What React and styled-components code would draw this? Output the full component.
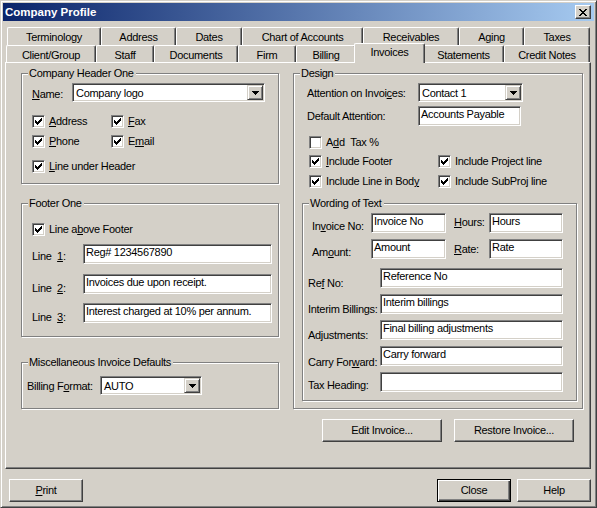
import React from 'react';
import styled, { createGlobalStyle, css } from 'styled-components';

const FACE = '#d4d0c8';
const LIGHT = '#ffffff';
const SHADOW = '#808080';
const DARK = '#404040';

const GlobalStyle = createGlobalStyle`
  html, body { margin: 0; padding: 0; background: ${FACE}; }
  *, *::before, *::after { box-sizing: border-box; }
`;

const raised = css`
  border: 1px solid;
  border-color: ${LIGHT} ${DARK} ${DARK} ${LIGHT};
  box-shadow: inset -1px -1px 0 ${SHADOW};
`;

const sunken = css`
  border: 1px solid;
  border-color: ${SHADOW} ${LIGHT} ${LIGHT} ${SHADOW};
  box-shadow: inset 1px 1px 0 ${DARK}, inset -1px -1px 0 ${FACE};
`;

const Window = styled.div`
  width: 597px;
  height: 508px;
  background: ${FACE};
  border: 1px solid;
  border-color: ${FACE} ${DARK} ${DARK} ${FACE};
  box-shadow: inset 1px 1px 0 ${LIGHT}, inset -1px -1px 0 ${SHADOW};
  padding: 2px;
  display: flex;
  flex-direction: column;
  color: #000;
  font-family: "Liberation Sans", Arial, sans-serif;
  font-size: 11px;
  line-height: 13px;
  letter-spacing: -0.3px;
`;

const TitleBar = styled.div`
  height: 18px;
  flex-shrink: 0;
  display: flex;
  align-items: center;
  justify-content: space-between;
  padding: 0 3px 0 2px;
  background: linear-gradient(to right, #0a246a, #a6caf0);
`;

const Title = styled.span`
  color: #fff;
  font-weight: bold;
  font-size: 11.5px;
  letter-spacing: 0;
`;

const CaptionButton = styled.div`
  width: 16px;
  height: 14px;
  display: flex;
  align-items: center;
  justify-content: center;
  background: ${FACE};
  ${raised};
`;

const TabStrip = styled.div`
  margin-top: 6px;
  display: flex;
  flex-direction: column;
  position: relative;
  z-index: 1;
`;

const TabRow = styled.div`
  display: flex;
  height: ${p => p.$h}px;
  padding-left: ${p => p.$indent}px;
`;

const Tab = styled.div`
  width: ${p => p.$w}px;
  height: ${p => p.$h}px;
  flex-shrink: 0;
  display: flex;
  align-items: center;
  justify-content: center;
  padding-top: 2px;
  background: ${FACE};
  border-top: 1px solid ${LIGHT};
  border-left: 1px solid ${LIGHT};
  border-right: 1px solid ${DARK};
  box-shadow: inset -1px 0 0 ${SHADOW};
  border-radius: 2px 2px 0 0;
  white-space: nowrap;
  ${p => p.$active && css`
    position: relative;
    z-index: 2;
    margin: -2px -2px 0;
    height: ${p.$h + 3}px;
    padding-top: 0;
    padding-bottom: 2px;
  `}
`;

const Panel = styled.div`
  position: relative;
  margin: 0 3px 0 2px;
  height: 407px;
  flex-shrink: 0;
  border: 1px solid;
  border-color: ${LIGHT} ${DARK} ${DARK} ${LIGHT};
  box-shadow: inset -1px -1px 0 ${SHADOW};
  padding: 10px 7px 0 15px;
  display: flex;
  gap: 14px;
`;

const Column = styled.div`
  width: ${p => p.$w}px;
  flex-shrink: 0;
  display: flex;
  flex-direction: column;
`;

const Group = styled.div`
  position: relative;
  width: ${p => (p.$w ? `${p.$w}px` : 'auto')};
  height: ${p => p.$h}px;
  margin-top: ${p => p.$mt || 0}px;
  flex-shrink: 0;
  border: 1px solid ${SHADOW};
  box-shadow: 1px 1px 0 ${LIGHT}, inset 1px 1px 0 ${LIGHT};
  padding: ${p => p.$pad};
  display: flex;
  flex-direction: column;
`;

const Legend = styled.span`
  position: absolute;
  top: -7px;
  left: 6px;
  padding: 0 2px 0 1px;
  background: ${FACE};
  white-space: nowrap;
`;

const Row = styled.div`
  display: flex;
  align-items: ${p => (p.$center ? 'center' : 'flex-start')};
  margin-top: ${p => p.$mt || 0}px;
  margin-left: ${p => p.$ml || 0}px;
`;

const Label = styled.span`
  width: ${p => p.$w}px;
  flex-shrink: 0;
  margin-top: ${p => p.$dy || 0}px;
  margin-bottom: ${p => -(p.$dy || 0)}px;
  margin-left: ${p => p.$ml || 0}px;
  white-space: nowrap;
`;

const U = styled.span`
  text-decoration: underline;
`;

const Field = styled.div`
  width: ${p => p.$w}px;
  height: ${p => p.$h || 20}px;
  flex-shrink: 0;
  background: #fff;
  ${sunken};
  padding: 1px 2px;
  white-space: nowrap;
  overflow: hidden;
`;

const SelectBox = styled.div`
  width: ${p => p.$w}px;
  height: 19px;
  flex-shrink: 0;
  background: #fff;
  ${sunken};
  padding: 1px;
  display: flex;
  align-items: stretch;
`;

const SelectText = styled.span`
  flex: 1;
  padding: 1px 0 0 2px;
  display: flex;
  align-items: center;
  white-space: nowrap;
`;

const ArrowButton = styled.div`
  width: 16px;
  flex-shrink: 0;
  display: flex;
  align-items: center;
  justify-content: center;
  background: ${FACE};
  border: 1px solid;
  border-color: ${FACE} ${DARK} ${DARK} ${FACE};
  box-shadow: inset 1px 1px 0 ${LIGHT}, inset -1px -1px 0 ${SHADOW};
`;

const CheckItem = styled.label`
  display: flex;
  align-items: center;
  gap: 4px;
  width: ${p => (p.$w ? `${p.$w}px` : 'auto')};
  flex-shrink: 0;
  white-space: nowrap;
`;

const CheckSquare = styled.span`
  width: 13px;
  height: 13px;
  flex-shrink: 0;
  background: #fff;
  ${sunken};
  display: flex;
  align-items: center;
  justify-content: center;
`;

const ButtonRow = styled.div`
  display: flex;
  justify-content: flex-end;
  gap: 12px;
  margin-top: 10px;
  padding-right: 9px;
`;

const PushButton = styled.div`
  width: ${p => p.$w}px;
  height: 23px;
  flex-shrink: 0;
  display: flex;
  align-items: center;
  justify-content: center;
  background: ${FACE};
  ${raised};
  ${p => p.$default && css`
    border: 1px solid #000;
    box-shadow: inset 1px 1px 0 ${LIGHT}, inset -1px -1px 0 ${DARK}, inset -2px -2px 0 ${SHADOW};
  `}
`;

const ButtonBar = styled.div`
  display: flex;
  align-items: center;
  gap: 6px;
  margin-top: 10px;
  padding: 0 3px 0 6px;
`;

const Spacer = styled.div`
  flex: 1;
`;

const CloseGlyph = () => (
  <svg width="8" height="7" viewBox="0 0 8 7" shapeRendering="crispEdges">
    <path
      fill="#000"
      d="M0 0h2v1H0zM6 0h2v1H6zM1 1h2v1H1zM5 1h2v1H5zM2 2h4v1H2zM3 3h2v1H3zM2 4h4v1H2zM1 5h2v1H1zM5 5h2v1H5zM0 6h2v1H0zM6 6h2v1H6z"
    />
  </svg>
);

const DownArrow = () => (
  <svg width="7" height="4" viewBox="0 0 7 4" shapeRendering="crispEdges">
    <path fill="#000" d="M0 0h7v1H0zM1 1h5v1H1zM2 2h3v1H2zM3 3h1v1H3z" />
  </svg>
);

const CheckMark = () => (
  <svg width="7" height="7" viewBox="0 0 7 7" shapeRendering="crispEdges">
    <path
      fill="#000"
      d="M0 2h1v3H0zM1 3h1v3H1zM2 4h1v3H2zM3 3h1v3H3zM4 2h1v3H4zM5 1h1v3H5zM6 0h1v3H6z"
    />
  </svg>
);

const CheckBox = ({ checked = true, w, children }) => (
  <CheckItem $w={w}>
    <CheckSquare>{checked && <CheckMark />}</CheckSquare>
    <span>{children}</span>
  </CheckItem>
);

const Select = ({ w, children }) => (
  <SelectBox $w={w}>
    <SelectText>{children}</SelectText>
    <ArrowButton>
      <DownArrow />
    </ArrowButton>
  </SelectBox>
);

const topTabs = [
  ['Terminology', 94],
  ['Address', 75],
  ['Dates', 66],
  ['Chart of Accounts', 121],
  ['Receivables', 96],
  ['Aging', 65],
  ['Taxes', 66],
];

const bottomTabs = [
  ['Client/Group', 90],
  ['Staff', 58],
  ['Documents', 84],
  ['Firm', 58],
  ['Billing', 60],
  ['Invoices', 71, true],
  ['Statements', 81],
  ['Credit Notes', 86],
];

export default function App() {
  return (
    <>
      <GlobalStyle />
      <Window>
        <TitleBar>
          <Title>Company Profile</Title>
          <CaptionButton>
            <CloseGlyph />
          </CaptionButton>
        </TitleBar>

        <TabStrip>
          <TabRow $h={18} $indent={4}>
            {topTabs.map(([name, w]) => (
              <Tab key={name} $w={w} $h={18}>{name}</Tab>
            ))}
          </TabRow>
          <TabRow $h={17} $indent={3}>
            {bottomTabs.map(([name, w, active]) => (
              <Tab key={name} $w={w} $h={17} $active={active}>{name}</Tab>
            ))}
          </TabRow>
        </TabStrip>

        <Panel>
          <Column $w={258}>
            <Group $h={111} $pad="9px 0 0 10px">
              <Legend>Company Header One</Legend>
              <Row>
                <Label $w={40} $dy={5}><U>N</U>ame:</Label>
                <Select w={193}>Company logo</Select>
              </Row>
              <Row $mt={13} $center>
                <CheckBox w={79}><U>A</U>ddress</CheckBox>
                <CheckBox><U>F</U>ax</CheckBox>
              </Row>
              <Row $mt={7} $center>
                <CheckBox w={79}><U>P</U>hone</CheckBox>
                <CheckBox>E<U>m</U>ail</CheckBox>
              </Row>
              <Row $mt={12} $center>
                <CheckBox><U>L</U>ine under Header</CheckBox>
              </Row>
            </Group>

            <Group $h={134} $mt={19} $pad="19px 0 0 10px">
              <Legend>Footer One</Legend>
              <Row $center>
                <CheckBox>Line a<U>b</U>ove Footer</CheckBox>
              </Row>
              <Row $mt={8}>
                <Label $w={51} $dy={6}>Line&nbsp;&nbsp;<U>1</U>:</Label>
                <Field $w={189}>Reg# 1234567890</Field>
              </Row>
              <Row $mt={10}>
                <Label $w={51} $dy={8}>Line&nbsp;&nbsp;<U>2</U>:</Label>
                <Field $w={189}>Invoices due upon receipt.</Field>
              </Row>
              <Row $mt={9}>
                <Label $w={51} $dy={8}>Line&nbsp;&nbsp;<U>3</U>:</Label>
                <Field $w={189}>Interest charged at 10% per annum.</Field>
              </Row>
            </Group>

            <Group $h={47} $mt={25} $pad="13px 0 0 5px">
              <Legend>Miscellaneous Invoice Defaults</Legend>
              <Row>
                <Label $w={73} $dy={4}>Billing F<U>o</U>rmat:</Label>
                <Select w={102}>AUTO</Select>
              </Row>
            </Group>
          </Column>

          <Column $w={290}>
            <Group $h={336} $pad="9px 0 0 8px">
              <Legend>Design</Legend>
              <Row $ml={5}>
                <Label $w={111} $dy={4}>Attention on Invoi<U>c</U>es:</Label>
                <Select w={105}>Contact 1</Select>
              </Row>
              <Row $ml={5} $mt={4}>
                <Label $w={111} $dy={4}>Default Attention:</Label>
                <Field $w={103}>Accounts Payable</Field>
              </Row>
              <Row $ml={7} $mt={10} $center>
                <CheckBox checked={false}>A<U>d</U>d&nbsp;&nbsp;Tax %</CheckBox>
              </Row>
              <Row $ml={7} $mt={6} $center>
                <CheckBox w={129}><U>I</U>nclude Footer</CheckBox>
                <CheckBox>Include Project line</CheckBox>
              </Row>
              <Row $ml={7} $mt={7} $center>
                <CheckBox w={129}>Include Line in Bod<U>y</U></CheckBox>
                <CheckBox>Include SubProj line</CheckBox>
              </Row>

              <Group $w={275} $h={198} $mt={15} $pad="9px 0 0 9px">
                <Legend>Wording of Text</Legend>
                <Row>
                  <Label $w={59} $dy={7}>In<U>v</U>oice No:</Label>
                  <Field $w={75}>Invoice No</Field>
                  <Label $w={35} $ml={8} $dy={3}><U>H</U>ours:</Label>
                  <Field $w={74}>Hours</Field>
                </Row>
                <Row $mt={6}>
                  <Label $w={59} $dy={7}>Am<U>o</U>unt:</Label>
                  <Field $w={75}>Amount</Field>
                  <Label $w={35} $ml={8} $dy={4}><U>R</U>ate:</Label>
                  <Field $w={74}>Rate</Field>
                </Row>
                <Row $mt={9} $ml={-4}>
                  <Label $w={72} $dy={9}>Re<U>f</U> No:</Label>
                  <Field $w={183}>Reference No</Field>
                </Row>
                <Row $mt={6} $ml={-4}>
                  <Label $w={72} $dy={9}>Interim Billings:</Label>
                  <Field $w={183}>Interim billings</Field>
                </Row>
                <Row $mt={6} $ml={-4}>
                  <Label $w={72} $dy={9}>Adjustments:</Label>
                  <Field $w={183}>Final billing adjustments</Field>
                </Row>
                <Row $mt={6} $ml={-4}>
                  <Label $w={72} $dy={10}>Carry For<U>w</U>ard:</Label>
                  <Field $w={183}>Carry forward</Field>
                </Row>
                <Row $mt={6} $ml={-4}>
                  <Label $w={72} $dy={7}>Tax Heading:</Label>
                  <Field $w={183} />
                </Row>
              </Group>
            </Group>

            <ButtonRow>
              <PushButton $w={120}>Edit Invoice...</PushButton>
              <PushButton $w={120}>Restore Invoice...</PushButton>
            </ButtonRow>
          </Column>
        </Panel>

        <ButtonBar>
          <PushButton $w={74}><U>P</U>rint</PushButton>
          <Spacer />
          <PushButton $w={74} $default>Close</PushButton>
          <PushButton $w={74}>Help</PushButton>
        </ButtonBar>
      </Window>
    </>
  );
}
